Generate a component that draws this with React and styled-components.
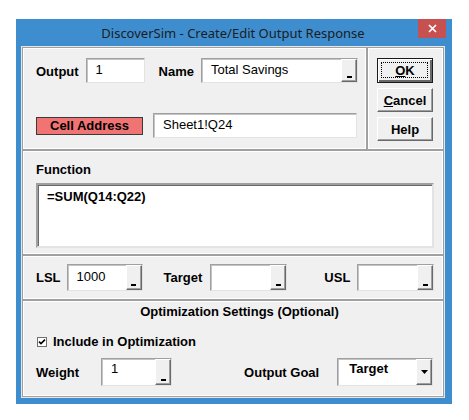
import React from 'react';
import styled, { createGlobalStyle } from 'styled-components';

const Global = createGlobalStyle`
  html, body { margin: 0; padding: 0; background: #fff; }
  body { font-family: "Liberation Sans", Arial, sans-serif; }
`;

const Window = styled.div`
  position: relative;
  margin: 19px 0 0 16px;
  width: 436px;
  height: 385px;
  box-sizing: border-box;
  background: #3e8ecf;
  padding: 0 7px 6px 5px;
  display: flex;
  flex-direction: column;
`;

const TitleBar = styled.div`
  height: 27px;
  flex: none;
  display: flex;
  align-items: center;
  justify-content: center;
  font-family: "Noto Sans", "Open Sans", sans-serif;
  font-size: 13px;
  color: #1c1c1c;
  padding-top: 1px;
  box-sizing: border-box;
`;

const CloseButton = styled.div`
  position: absolute;
  top: 0;
  right: 6px;
  width: 28px;
  height: 19px;
  background: #c75050;
  display: flex;
  align-items: center;
  justify-content: center;
`;

const Body = styled.div`
  flex: 1;
  background: #f0f0f0;
  border: 1px solid #e6e6e6;
  display: flex;
  flex-direction: column;
`;

const Panel = styled.div`
  box-sizing: border-box;
  border: 1px solid #a0a0a0;
  box-shadow: inset 0 0 0 1px #fff;
  height: ${p => p.$h}px;
  width: ${p => (p.$w ? `${p.$w}px` : 'auto')};
  flex: ${p => (p.$grow ? '1' : 'none')};
  padding: ${p => p.$pad};
  display: flex;
  flex-direction: column;
`;

const TopRow = styled.div`
  display: flex;
  flex: none;
`;

const Row = styled.div`
  display: flex;
  align-items: ${p => p.$align || 'center'};
  margin-top: ${p => p.$mt || 0}px;
`;

const Label = styled.span`
  font-weight: bold;
  font-size: 13px;
  line-height: 16px;
  color: #000;
  margin-left: ${p => p.$ml || 0}px;
  margin-right: ${p => p.$mr || 0}px;
  padding-top: ${p => p.$pt || 0}px;
  white-space: nowrap;
`;

const Field = styled.div`
  box-sizing: border-box;
  width: ${p => p.$w}px;
  height: ${p => p.$h || 25}px;
  background: #fff;
  border: 1px solid;
  border-color: #a0a0a0 #e3e3e3 #e3e3e3 #a0a0a0;
  box-shadow: inset 1px 1px 0 #c4c4c4;
  display: flex;
  align-items: stretch;
  flex: none;
`;

const FieldText = styled.div`
  flex: 1;
  padding: ${p => p.$pt || 3}px 0 0 ${p => p.$pl || 9}px;
  font-size: 13px;
  line-height: 16px;
  font-weight: ${p => (p.$bold ? 'bold' : 'normal')};
  color: #000;
  white-space: nowrap;
`;

const Ellipsis = styled.div`
  box-sizing: border-box;
  width: 16px;
  background: #f0f0f0;
  border: 1px solid;
  border-color: #fff #696969 #696969 #fff;
  box-shadow: inset -1px -1px 0 #a0a0a0;
  display: flex;
  align-items: ${p => (p.$arrow ? 'center' : 'flex-end')};
  justify-content: center;
  padding-bottom: ${p => (p.$arrow ? 0 : 3)}px;
`;

const Underscore = styled.span`
  display: block;
  width: 5px;
  height: 2px;
  background: #000;
`;

const CellAddress = styled.div`
  box-sizing: border-box;
  width: 107px;
  height: 18px;
  background: #f07474;
  border: 1px solid #3a3a3a;
  font-weight: bold;
  font-size: 13px;
  line-height: 16px;
  text-align: center;
  margin-right: 10px;
  flex: none;
`;

const ButtonStack = styled.div`
  display: flex;
  flex-direction: column;
  gap: 5px;
`;

const Button = styled.div`
  box-sizing: border-box;
  width: 56px;
  height: ${p => p.$h || 24}px;
  background: #f0f0f0;
  border: 1px solid;
  border-color: ${p => (p.$default ? '#1a1a1a' : '#fff #696969 #696969 #fff')};
  box-shadow: ${p =>
    p.$default
      ? 'inset 1px 1px 0 #fff, inset -2px -2px 0 #696969, inset -1px -1px 0 #a0a0a0'
      : 'inset -1px -1px 0 #a0a0a0'};
  display: flex;
  align-items: center;
  justify-content: center;
  font-weight: bold;
  font-size: 13px;
  color: #000;
  position: relative;
  u { text-decoration: underline; text-underline-offset: 1px; }
`;

const FocusRing = styled.div`
  position: absolute;
  inset: 3px 4px 4px 3px;
  border: 1px dotted #000;
`;

const TextArea = styled.div`
  box-sizing: border-box;
  width: 398px;
  height: 65px;
  background: #fff;
  border: 2px solid;
  border-color: #a0a0a0 #e3e3e3 #e3e3e3 #a0a0a0;
  box-shadow: inset 1px 1px 0 #696969;
  padding: 4px 0 0 9px;
  font-weight: bold;
  font-size: 13px;
  line-height: 16px;
`;

const Title = styled.div`
  text-align: center;
  font-weight: bold;
  font-size: 13px;
  line-height: 16px;
`;

const CheckRow = styled.label`
  display: flex;
  align-items: center;
  gap: 6px;
  margin-left: 1px;
  font-weight: bold;
  font-size: 13px;
  line-height: 16px;
`;

const Check = () => (
  <svg width="10" height="10" viewBox="0 0 10 10">
    <rect x="0.5" y="0.5" width="9" height="9" fill="#fff" stroke="#707070" />
    <path d="M2 4.6 L4 6.6 L8 2.6" stroke="#000" strokeWidth="1.6" fill="none" />
  </svg>
);

const Input = ({ w, h, text, bold, pt, pl, ellipsis = true, arrow }) => (
  <Field $w={w} $h={h}>
    <FieldText $bold={bold} $pt={pt} $pl={pl}>{text}</FieldText>
    {ellipsis && (
      <Ellipsis $arrow={arrow}>
        {arrow ? (
          <svg width="7" height="4" viewBox="0 0 7 4">
            <path d="M0 0 H7 L3.5 4 Z" fill="#000" />
          </svg>
        ) : (
          <Underscore />
        )}
      </Ellipsis>
    )}
  </Field>
);

export default function App() {
  return (
    <>
      <Global />
      <Window>
        <TitleBar>DiscoverSim - Create/Edit Output Response</TitleBar>
        <CloseButton>
          <svg width="9" height="9" viewBox="0 0 9 9">
            <path d="M1 1 L8 8 M8 1 L1 8" stroke="#fff" strokeWidth="1.7" />
          </svg>
        </CloseButton>
        <Body>
          <TopRow>
            <Panel $h={103} $w={345} $pad="10px 0 0 13px">
              <Row>
                <Label $mr={7} $pt={3}>Output</Label>
                <Input w={59} text="1" ellipsis={false} />
                <Label $ml={14} $mr={7} $pt={3}>Name</Label>
                <Input w={157} text="Total Savings" />
              </Row>
              <Row $mt={30}>
                <CellAddress>Cell Address</CellAddress>
                <Input w={204} text="Sheet1!Q24" ellipsis={false} />
              </Row>
            </Panel>
            <Panel $h={103} $grow $pad="10px 0 0 9px">
              <ButtonStack>
                <Button $default $h={25}>
                  <FocusRing />
                  <span><u>O</u>K</span>
                </Button>
                <Button><span><u>C</u>ancel</span></Button>
                <Button>Help</Button>
              </ButtonStack>
            </Panel>
          </TopRow>
          <Panel $h={105} $pad="11px 0 0 13px">
            <Label>Function</Label>
            <Row $mt={5}>
              <TextArea>=SUM(Q14:Q22)</TextArea>
            </Row>
          </Panel>
          <Panel $h={45} $pad="8px 0 0 13px">
            <Row>
              <Label $mr={6}>LSL</Label>
              <Input w={76} h={27} text="1000" pt={4} />
              <Label $ml={21} $mr={8}>Target</Label>
              <Input w={77} h={27} text="" />
              <Label $ml={37} $mr={7}>USL</Label>
              <Input w={77} h={27} text="" />
            </Row>
          </Panel>
          <Panel $h={97} $pad="3px 0 0 13px">
            <Title>Optimization Settings (Optional)</Title>
            <Row $mt={14}>
              <CheckRow>
                <Check />
                Include in Optimization
              </CheckRow>
            </Row>
            <Row $mt={8}>
              <Label $mr={22} $pt={2}>Weight</Label>
              <Input w={71} h={28} text="1" pt={2} />
              <Label $ml={72} $mr={18} $pt={2}>Output Goal</Label>
              <Input w={96} h={28} text="Target" bold pt={2} pl={11} arrow />
            </Row>
          </Panel>
        </Body>
      </Window>
    </>
  );
}
